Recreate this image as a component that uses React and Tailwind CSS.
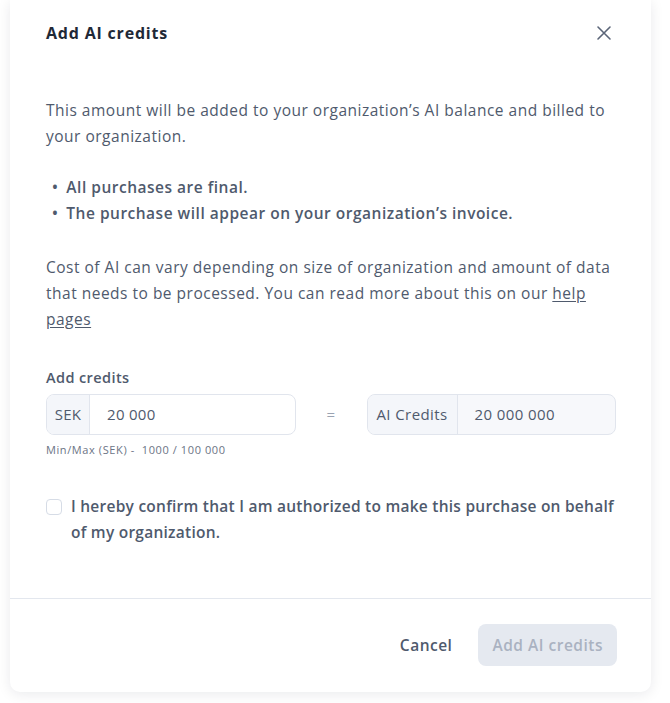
import React from 'react';

const CloseIcon = () => (
  <svg width="16" height="16" viewBox="0 0 16 16" fill="none" stroke="currentColor" strokeWidth="1.6" strokeLinecap="round">
    <path d="M2 2L14 14M14 2L2 14" />
  </svg>
);

const App = () => {
  return (
    <div className="h-[703px] bg-white pb-[10px] pl-[10px] pr-[19px]" style={{ fontFamily: '"Open Sans", "Liberation Sans", sans-serif' }}>
      <div className="flex flex-col rounded-b-[10px] bg-white shadow-[0_2px_14px_rgba(15,23,42,0.09)]">
        <div className="flex items-center justify-between pl-[36px] pr-[39px] pt-[21px]">
          <h2 className="text-[16px] font-bold leading-6 tracking-[0.8px] text-[#1f2937]">Add AI credits</h2>
          <button type="button" className="text-[#5b6578]">
            <CloseIcon />
          </button>
        </div>

        <div className="pl-[36px] pr-[35px] pt-[53px] text-[15.5px] leading-[25.6px] tracking-[0.5px] text-[#4f5a6d]">
          <p>This amount will be added to your organization’s AI balance and billed to your organization.</p>

          <ul className="mt-[26px] pl-[6px] font-semibold">
            <li className="flex gap-[8px]"><span>•</span>All purchases are final.</li>
            <li className="flex gap-[8px]"><span>•</span>The purchase will appear on your organization’s invoice.</li>
          </ul>

          <p className="mt-[29px]">
            Cost of AI can vary depending on size of organization and amount of data that needs to be processed. You can read more about this on our{' '}
            <a href="#" className="underline underline-offset-2">help pages</a>
          </p>

          <div className="mt-[36px]">
            <label className="block text-[14.5px] font-semibold leading-5 tracking-[0.4px] text-[#4f5a6d]">Add credits</label>
            <div className="mt-[6px] grid grid-cols-[1fr_71px_1fr] items-center">
              <div className="flex h-[41px] overflow-hidden rounded-lg border border-[#e1e5ed] bg-white text-[15px] tracking-[0.3px]">
                <span className="flex w-[43px] items-center justify-center border-r border-[#e1e5ed] bg-[#f4f6fa] text-[#4f5a6d]">SEK</span>
                <span className="flex items-center pl-[17px] text-[#4f5a6d]">20 000</span>
              </div>
              <span className="text-center text-[15px] text-[#9aa3b2]">=</span>
              <div className="flex h-[41px] overflow-hidden rounded-lg border border-[#e1e5ed] bg-[#f7f8fb] text-[15px] tracking-[0.4px]">
                <span className="flex w-[90px] items-center justify-center border-r border-[#e1e5ed] bg-[#f4f6fa] text-[#4f5a6d]">AI Credits</span>
                <span className="flex items-center pl-[17px] text-[#4f5a6d]">20 000 000</span>
              </div>
            </div>
            <p className="mt-[8px] text-[11px] leading-[14px] tracking-[0.6px] text-[#6b7485]">Min/Max (SEK) -&nbsp; 1000 / 100 000</p>
          </div>

          <label className="mt-[37px] flex items-start gap-[9px] font-semibold tracking-[0.25px]">
            <span className="mt-[5px] h-[16px] w-[16px] shrink-0 rounded-[4px] border border-[#d6dce6] bg-white" />
            <span>I hereby confirm that I am authorized to make this purchase on behalf of my organization.</span>
          </label>
        </div>

        <div className="mt-[53px] border-t border-[#e3e7ee]" />

        <div className="flex items-center justify-end gap-[10px] pb-[26px] pl-[36px] pr-[34px] pt-[25px] tracking-[0.5px]">
          <button type="button" className="h-[42px] rounded-lg px-4 text-[15.5px] font-semibold text-[#4f5a6d]">Cancel</button>
          <button type="button" disabled className="h-[42px] rounded-lg bg-[#e5e9f0] px-[14px] text-[15.5px] font-semibold text-[#aab2c1]">Add AI credits</button>
        </div>
      </div>
    </div>
  );
};

export default App;
